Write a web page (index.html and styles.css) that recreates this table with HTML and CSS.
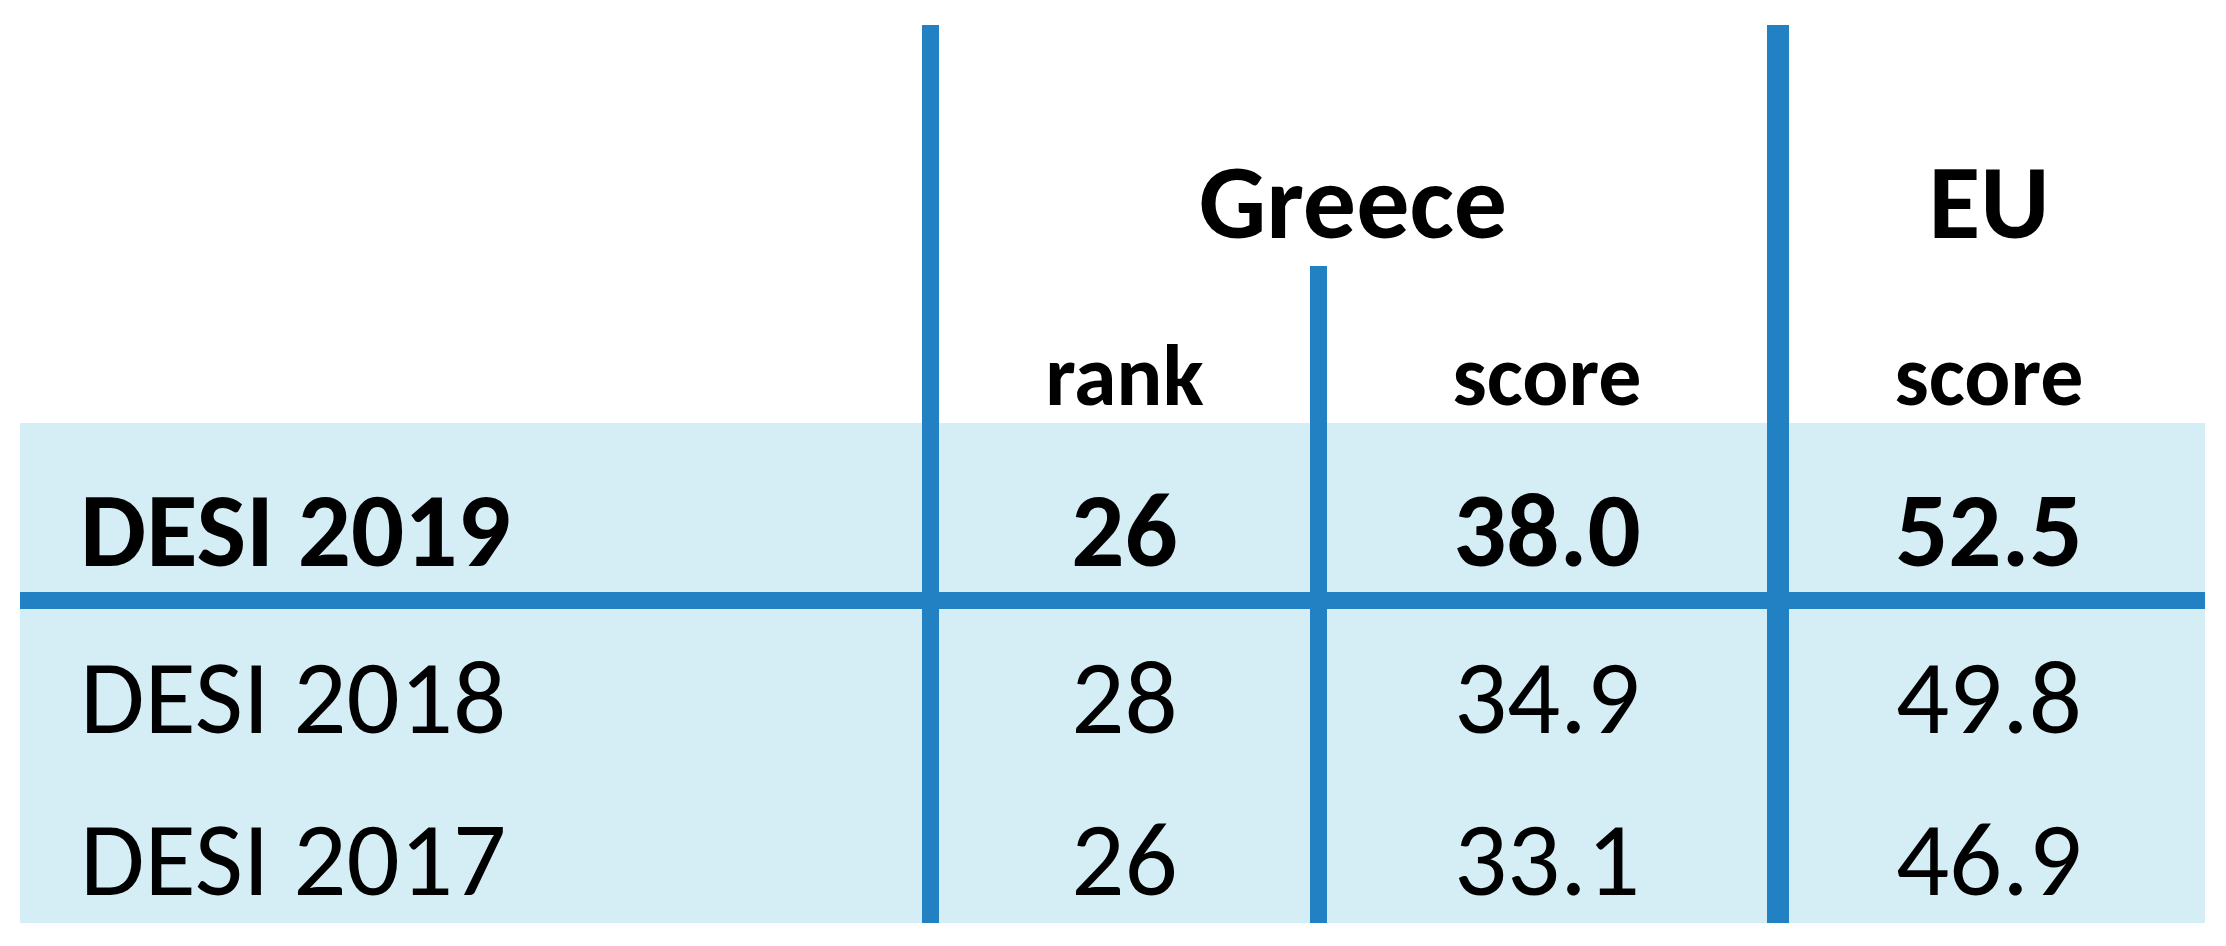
FILE: index.html
```html
<!DOCTYPE html>
<html lang="en">
<head>
<meta charset="utf-8">
<title>DESI Greece vs EU</title>
<link rel="stylesheet" href="styles.css">
</head>
<body>
<div class="page">
  <div class="table">
    <div class="band"></div>

    <div class="cell head greece">Greece</div>
    <div class="cell head eu">EU</div>

    <div class="cell sub c-rank">rank</div>
    <div class="cell sub c-score">score</div>
    <div class="cell sub c-eu">score</div>

    <div class="cell label r-2019 strong">DESI 2019</div>
    <div class="cell val c-rank r-2019 strong">26</div>
    <div class="cell val c-score r-2019 strong">38.0</div>
    <div class="cell val c-eu r-2019 strong">52.5</div>

    <div class="hline"></div>

    <div class="cell label r-2018">DESI 2018</div>
    <div class="cell val c-rank r-2018">28</div>
    <div class="cell val c-score r-2018">34.9</div>
    <div class="cell val c-eu r-2018">49.8</div>

    <div class="cell label r-2017">DESI 2017</div>
    <div class="cell val c-rank r-2017">26</div>
    <div class="cell val c-score r-2017">33.1</div>
    <div class="cell val c-eu r-2017">46.9</div>

    <div class="vline v-left"></div>
    <div class="vline v-mid"></div>
    <div class="vline v-right"></div>
  </div>
</div>
</body>
</html>
```

FILE: styles.css
```css
html, body {
  margin: 0;
  padding: 0;
  background: #ffffff;
}

body {
  font-family: "Carlito", "Lato", "Open Sans", sans-serif;
  color: #000000;
}

.page {
  width: 2226px;
  height: 946px;
  padding: 25px 0 0 20px;
  box-sizing: border-box;
}

.table {
  display: grid;
  grid-template-columns: 902px 17px 371px 17px 440px 22px 416px;
  grid-template-rows: 241px 157px 169px 17px 157px 157px;
}

.band {
  grid-column: 1 / 8;
  grid-row: 3 / 7;
  background: #d5edf5;
}

.vline {
  background: #2281c2;
  grid-row: 1 / 7;
}
.v-left { grid-column: 2; }
.v-mid { grid-column: 4; grid-row: 2 / 7; }
.v-right { grid-column: 6; }

.hline {
  grid-column: 1 / 8;
  grid-row: 4;
  background: #2281c2;
}

.cell {
  display: flex;
  align-items: flex-end;
  justify-content: center;
  line-height: 1;
  white-space: nowrap;
}

.head {
  grid-row: 1;
  font-size: 106px;
  font-weight: 700;
  padding-bottom: 11px;
}
.greece { grid-column: 3 / 6; }
.eu { grid-column: 7; padding-right: 16px; }

.sub {
  grid-row: 2;
  font-size: 86px;
  font-weight: 700;
  padding-bottom: 4px;
}

.c-rank { grid-column: 3; }
.c-score { grid-column: 5; }
.c-eu { grid-column: 7; padding-right: 16px; }

.label {
  grid-column: 1;
  justify-content: flex-start;
  padding-left: 60px;
}

.label, .val {
  font-size: 105px;
  font-weight: 400;
}

.strong { font-weight: 700; }

.r-2019 { grid-row: 3; padding-bottom: 9px; }
.r-2018 { grid-row: 5; padding-bottom: 16px; }
.r-2017 { grid-row: 6; padding-bottom: 11px; }
```
